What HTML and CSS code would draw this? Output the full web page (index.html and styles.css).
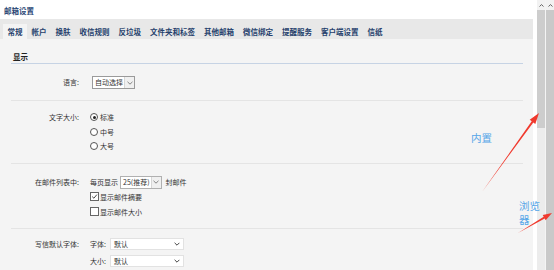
FILE: index.html
```html
<!DOCTYPE html>
<html lang="zh-CN">
<head>
<meta charset="UTF-8">
<title>邮箱设置</title>
<link rel="stylesheet" href="styles.css">
</head>
<body>
  <div class="page">
    <div class="main">
      <div class="title">邮箱设置</div>

      <div class="tabs">
        <span class="tab active">常规</span>
        <span class="tab">帐户</span>
        <span class="tab">换肤</span>
        <span class="tab">收信规则</span>
        <span class="tab">反垃圾</span>
        <span class="tab">文件夹和标签</span>
        <span class="tab">其他邮箱</span>
        <span class="tab">微信绑定</span>
        <span class="tab">提醒服务</span>
        <span class="tab">客户端设置</span>
        <span class="tab">信纸</span>
      </div>

      <div class="content">
        <div class="section-head">显示</div>

        <!-- 语言 -->
        <div class="row row-lang">
          <div class="label">语言:</div>
          <div class="ctrl">
            <span class="old-select">
              <span class="old-select-text">自动选择</span>
              <span class="old-select-btn"><svg width="6" height="4" viewBox="0 0 6 4"><path d="M0.5 0.8 L3 3.2 L5.5 0.8" fill="none" stroke="#777" stroke-width="0.9"/></svg></span>
            </span>
          </div>
        </div>

        <!-- 文字大小 -->
        <div class="row row-size">
          <div class="label">文字大小:</div>
          <div class="ctrl">
            <div class="line"><span class="radio checked"></span>标准</div>
            <div class="line"><span class="radio"></span>中号</div>
            <div class="line"><span class="radio"></span>大号</div>
          </div>
        </div>

        <!-- 邮件列表 -->
        <div class="row row-list">
          <div class="label">在邮件列表中:</div>
          <div class="ctrl">
            <div class="line first">
              每页显示
              <span class="old-select small">
                <span class="old-select-text">25(推荐)</span>
                <span class="old-select-btn"><svg width="6" height="4" viewBox="0 0 6 4"><path d="M0.5 0.8 L3 3.2 L5.5 0.8" fill="none" stroke="#777" stroke-width="0.9"/></svg></span>
              </span>
              封邮件
            </div>
            <div class="line"><span class="check checked"><svg width="7" height="7" viewBox="0 0 7 7"><path d="M1.2 3.6 L2.9 5.2 L5.9 1.6" fill="none" stroke="#333" stroke-width="0.9"/></svg></span>显示邮件摘要</div>
            <div class="line"><span class="check"></span>显示邮件大小</div>
          </div>
        </div>

        <!-- 字体 -->
        <div class="row row-font">
          <div class="label">写信默认字体:</div>
          <div class="ctrl">
            <div class="line">字体:<span class="flat-select"><span>默认</span><svg width="6" height="4" viewBox="0 0 6 4"><path d="M0.6 0.8 L3 3.2 L5.4 0.8" fill="none" stroke="#444" stroke-width="1"/></svg></span></div>
            <div class="line">大小:<span class="flat-select"><span>默认</span><svg width="6" height="4" viewBox="0 0 6 4"><path d="M0.6 0.8 L3 3.2 L5.4 0.8" fill="none" stroke="#444" stroke-width="1"/></svg></span></div>
          </div>
        </div>
      </div>
    </div>

    <div class="gutter"></div>

    <!-- 内置滚动条 -->
    <div class="scrollbar inner">
      <div class="sb-arrow"><svg width="5" height="3" viewBox="0 0 5 3"><path d="M0.5 2.5 L2.5 0.6 L4.5 2.5" fill="none" stroke="#555" stroke-width="0.9"/></svg></div>
      <div class="sb-thumb"></div>
      <div class="sb-track"></div>
    </div>
    <!-- 浏览器滚动条 -->
    <div class="scrollbar outer">
      <div class="sb-arrow"><svg width="5" height="3" viewBox="0 0 5 3"><path d="M0.5 2.5 L2.5 0.6 L4.5 2.5" fill="none" stroke="#555" stroke-width="0.9"/></svg></div>
      <div class="sb-thumb full"></div>
    </div>

    <!-- 标注 -->
    <div class="note note-inner">内置</div>
    <div class="note note-browser">浏览<br>器</div>
    <svg class="arrows" width="554" height="270" viewBox="0 0 554 270">
      <polygon points="482,192 531.7,121.3 529.7,119.8 539,113 535.3,124 533.3,122.5" fill="#f03a2e"/>
      <polygon points="518,233 543.7,216.7 542.7,215 552,213 545.7,220.2 544.7,218.5" fill="#f03a2e"/>
    </svg>
  </div>
</body>
</html>
```

FILE: styles.css
```css
body {
  margin: 0;
  padding: 0;
  background: #fff;
  font-family: "Noto Sans CJK SC", "Liberation Sans", sans-serif;
  color: #333;
}

.page {
  position: relative;
  display: flex;
  width: 554px;
  height: 270px;
  overflow: hidden;
}

.main {
  width: 533px;
  display: flex;
  flex-direction: column;
}

/* 标题 */
.title {
  height: 19px;
  line-height: 21px;
  padding-left: 4px;
  font-size: 7.5px;
  font-weight: bold;
  color: #2a4674;
  background: #fff;
}

/* 选项卡 */
.tabs {
  height: 15px;
  padding: 5px 0 0 3px;
  display: flex;
  background: #e8e8e8;
}
.tab {
  padding: 0 4.5px;
  line-height: 15px;
  font-size: 7.5px;
  font-weight: bold;
  color: #253f6c;
  white-space: nowrap;
}
.tab.active {
  background: #f4f4f4;
}

/* 内容 */
.content {
  flex: 1;
  background: #f4f4f4;
  padding: 0 10px 0 11px;
}
.section-head {
  padding: 12px 0 0 2px;
  height: 12px;
  line-height: 12px;
  font-size: 7.5px;
  font-weight: bold;
  color: #222;
  border-bottom: 1px solid #c6d3e4;
}

.row {
  display: grid;
  grid-template-columns: 68px 1fr;
  column-gap: 11px;
  border-bottom: 1px solid #e4e4e4;
  font-size: 7px;
}
.label {
  text-align: right;
  white-space: nowrap;
}
.ctrl .line {
  display: flex;
  align-items: center;
  white-space: nowrap;
}

.row-lang {
  padding: 12px 0 11px;
}
.row-lang .label,
.row-lang .ctrl {
  line-height: 13px;
  height: 13px;
}

.row-size {
  padding: 9px 0 9.5px;
}
.row-size .label,
.row-size .line {
  line-height: 14.5px;
  height: 14.5px;
}

.row-list {
  padding: 11px 0 9px;
}
.row-list .label,
.row-list .line.first {
  line-height: 14px;
  height: 14px;
}
.row-list .line {
  height: 15px;
}

.row-font {
  padding: 7px 0 0;
  border-bottom: none;
}
.row-font .label,
.row-font .line {
  line-height: 16.5px;
  height: 16.5px;
}

/* 旧式下拉框 */
.old-select {
  display: inline-flex;
  height: 11px;
  margin-left: 2px;
  border: 1px solid #9a9a9a;
  background: #fff;
  white-space: nowrap;
}
.old-select-text {
  padding: 0 1px 0 2px;
  line-height: 11px;
  border-right: 1px solid #d6d6d6;
}
.old-select-btn {
  width: 9px;
  display: flex;
  align-items: center;
  justify-content: center;
  background: #f0f0f0;
}
.old-select.small {
  margin: 0 4px 0 2px;
  border-color: #b0b0b0;
}

/* 单选框 */
.radio {
  width: 6px;
  height: 6px;
  margin-right: 2px;
  border: 1px solid #555;
  border-radius: 50%;
  background: #fff;
  position: relative;
}
.radio.checked::after {
  content: "";
  position: absolute;
  left: 1.5px;
  top: 1.5px;
  width: 3px;
  height: 3px;
  border-radius: 50%;
  background: #222;
}

/* 复选框 */
.check {
  width: 7px;
  height: 7px;
  margin-right: 1px;
  border: 1px solid #666;
  background: #fff;
  display: flex;
}

/* 扁平下拉框 */
.flat-select {
  display: inline-flex;
  align-items: center;
  justify-content: space-between;
  width: 66px;
  height: 10px;
  margin-left: 4px;
  padding: 0 3px;
  border: 1px solid #e2e2e2;
  background: #fff;
  line-height: 10px;
}

/* 滚动条 */
.gutter {
  width: 4px;
  background: #fff;
}
.scrollbar {
  display: flex;
  flex-direction: column;
}
.scrollbar.inner {
  width: 8px;
  border-right: 1px solid #f4f4f4;
}
.scrollbar.outer {
  width: 8px;
}
.sb-arrow {
  height: 10px;
  display: flex;
  align-items: center;
  justify-content: center;
  background: #f2f2f2;
}
.sb-thumb {
  height: 118px;
  background: #cdcdcd;
}
.sb-thumb.full {
  flex: 1;
  background: #c9c9c9;
}
.sb-track {
  flex: 1;
  background: #ececec;
}

/* 标注 */
.note {
  position: absolute;
  font-size: 10.5px;
  line-height: 14px;
  color: #55a6e8;
}
.note-inner {
  left: 471px;
  top: 131px;
}
.note-browser {
  left: 519px;
  top: 199px;
}
.arrows {
  position: absolute;
  left: 0;
  top: 0;
  pointer-events: none;
}
```
